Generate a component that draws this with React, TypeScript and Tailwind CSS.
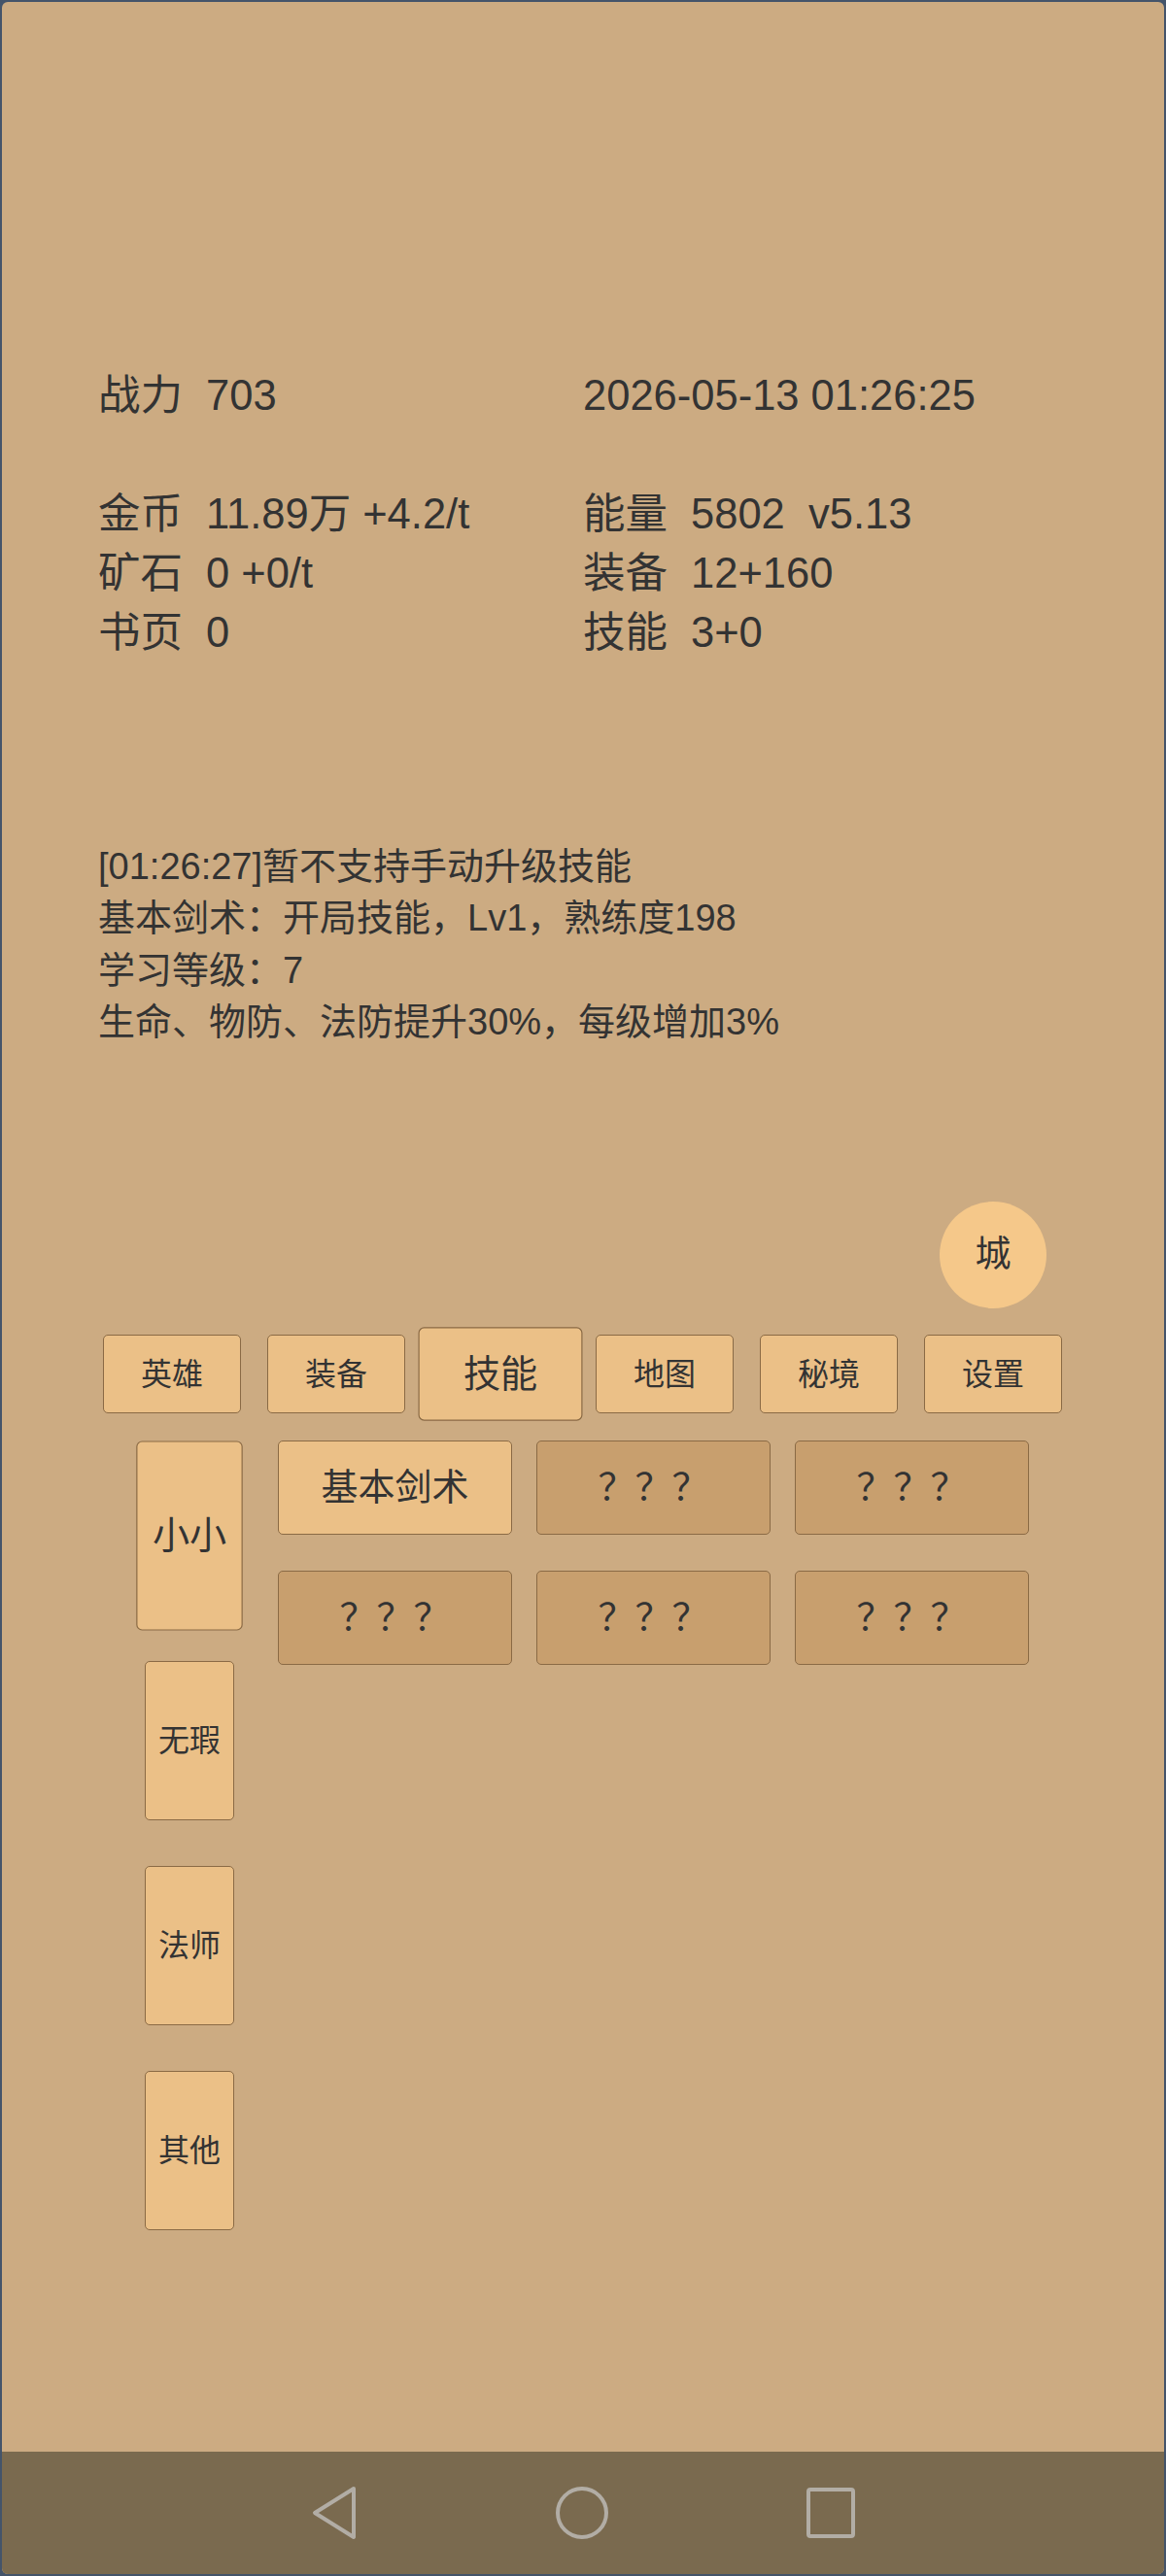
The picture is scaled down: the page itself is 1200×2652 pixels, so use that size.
import React from "react";

const tabs = ["英雄", "装备", "技能", "地图", "秘境", "设置"];
const heroes = ["小小", "无瑕", "法师", "其他"];
const skills = [
  { name: "基本剑术", open: true },
  { name: "？？？", open: false },
  { name: "？？？", open: false },
  { name: "？？？", open: false },
  { name: "？？？", open: false },
  { name: "？？？", open: false },
];

function Stat({ label, value }: { label?: string; value: string }) {
  return (
    <div className="flex whitespace-pre">
      {label ? <span className="inline-block w-[111px]">{label}</span> : null}
      <span>{value}</span>
    </div>
  );
}

export default function App() {
  return (
    <div className="w-[1200px] h-[2652px] bg-[#44546a] p-[2px]">
      <div className="h-full rounded-[6px] overflow-hidden bg-[#ccab82] flex flex-col font-['Liberation_Sans','Noto_Sans_CJK_SC',sans-serif] text-[#333333]">
        <main className="flex-1 pt-[375px] px-[99px]">
          <div className="grid grid-cols-2 text-[43.5px] leading-[61px]">
            <Stat label="战力" value="703" />
            <Stat value="2026-05-13 01:26:25" />
            <div className="h-[61px]" />
            <div className="h-[61px]" />
            <Stat label="金币" value="11.89万 +4.2/t" />
            <Stat label="能量" value="5802  v5.13" />
            <Stat label="矿石" value="0 +0/t" />
            <Stat label="装备" value="12+160" />
            <Stat label="书页" value="0" />
            <Stat label="技能" value="3+0" />
          </div>

          <div className="mt-[184px] text-[38px] leading-[53.3px]">
            <div>[01:26:27]暂不支持手动升级技能</div>
            <div>基本剑术：开局技能，Lv1，熟练度198</div>
            <div>学习等级：7</div>
            <div>生命、物防、法防提升30%，每级增加3%</div>
          </div>

          <div className="mt-[158px] flex justify-end pr-[22px]">
            <div className="w-[110px] h-[110px] rounded-full bg-[#f5c88a] flex items-center justify-center text-[37px]">
              城
            </div>
          </div>

          <div className="mt-[27px] ml-[5px] flex gap-[27px]">
            {tabs.map((t) => (
              <div
                key={t}
                className={
                  t === "技能"
                    ? "relative z-10 w-[142px] h-[81px] rounded-[5px] border border-[#8a6a45] bg-[#ebc087] flex items-center justify-center text-[32px] scale-[1.19]"
                    : "w-[142px] h-[81px] rounded-[5px] border border-[#8a6a45] bg-[#ebc087] flex items-center justify-center text-[32px]"
                }
              >
                {t}
              </div>
            ))}
          </div>

          <div className="mt-[28px] flex">
            <div className="ml-[48px] pt-[16px] w-[92px] flex flex-col gap-[47px]">
              {heroes.map((h, i) => (
                <div
                  key={h}
                  className={
                    i === 0
                      ? "relative z-10 w-[92px] h-[164px] rounded-[5px] border border-[#8a6a45] bg-[#ebc087] flex items-center justify-center text-[32px] scale-[1.19]"
                      : "w-[92px] h-[164px] rounded-[5px] border border-[#8a6a45] bg-[#ebc087] flex items-center justify-center text-[32px]"
                  }
                >
                  {h}
                </div>
              ))}
            </div>
            <div className="ml-[45px] grid grid-cols-[241px_241px_241px] gap-x-[25px] gap-y-[37px] content-start">
              {skills.map((s, i) => (
                <div
                  key={i}
                  className={
                    s.open
                      ? "h-[97px] rounded-[5px] border border-[#8a6a45] bg-[#ebc087] flex items-center justify-center text-[38px]"
                      : "h-[97px] rounded-[5px] border border-[#8a6a45] bg-[#c89f6e] flex items-center justify-center text-[38px]"
                  }
                >
                  {s.name}
                </div>
              ))}
            </div>
          </div>
        </main>

        <nav className="h-[126px] bg-[#7a6a4f] flex items-center justify-center gap-[204px]">
          <svg width="48" height="56" viewBox="0 0 48 56" fill="none">
            <path
              d="M44 3 L4 28 L44 53 Z"
              stroke="#b2ada5"
              strokeWidth="4"
              strokeLinejoin="round"
            />
          </svg>
          <svg width="54" height="54" viewBox="0 0 54 54" fill="none">
            <circle cx="27" cy="27" r="25" stroke="#b2ada5" strokeWidth="4" />
          </svg>
          <svg width="50" height="52" viewBox="0 0 50 52" fill="none">
            <rect x="2" y="2" width="46" height="48" rx="2" stroke="#b2ada5" strokeWidth="4" />
          </svg>
        </nav>
      </div>
    </div>
  );
}
